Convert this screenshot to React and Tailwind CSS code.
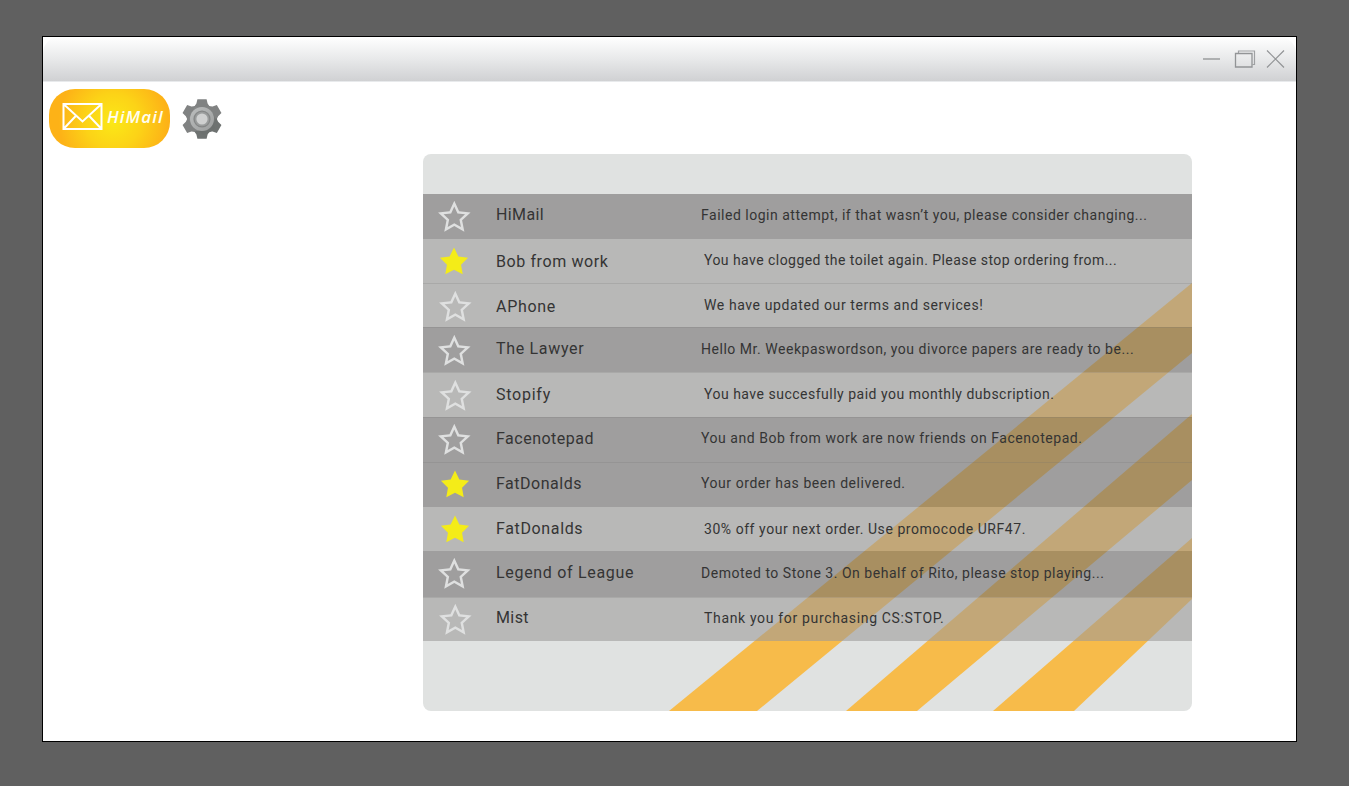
import React from "react";

const MAILS = [
  { from: "HiMail", text: "Failed login attempt, if that wasn’t you, please consider changing...", dark: true, row: "h-[45px]", ft: "tracking-[0.4px] pt-[11px]", tt: "tracking-[0.51px] pt-[11px]" },
  { from: "Bob from work", text: "You have clogged the toilet again. Please stop ordering from...", starred: true, row: "h-[44px]", ft: "tracking-[0.6px] pt-[13px]", tt: "tracking-[0.45px] pt-[11px]" },
  { from: "APhone", text: "We have updated our terms and services!", row: "h-[44px]", ft: "tracking-[0.7px] pt-[14px]", tt: "tracking-[0.6px] pt-[12px]", line: true, st: "pt-[1px]" },
  { from: "The Lawyer", text: "Hello Mr. Weekpaswordson, you divorce papers are ready to be...", dark: true, row: "h-[45px]", ft: "tracking-[0.68px] pt-[12px]", tt: "tracking-[0.53px] pt-[12px]", line: true, st: "pt-[1px]" },
  { from: "Stopify", text: "You have succesfully paid you monthly dubscription.", row: "h-[45px]", ft: "tracking-[0.75px] pt-[13px]", tt: "tracking-[0.5px] pt-[12px]", line: true, st: "pt-[1px]" },
  { from: "Facenotepad", text: "You and Bob from work are now friends on Facenotepad.", dark: true, row: "h-[45px]", ft: "tracking-[0.5px] pt-[12px]", tt: "tracking-[0.55px] pt-[11px]", line: true },
  { from: "FatDonalds", text: "Your order has been delivered.", dark: true, starred: true, row: "h-[45px]", ft: "tracking-[0.52px] pt-[12px]", tt: "tracking-[0.56px] pt-[11px]", line: true, st: "pl-[1px]" },
  { from: "FatDonalds", text: "30% off your next order. Use promocode URF47.", starred: true, row: "h-[44px]", ft: "tracking-[0.64px] pt-[12px]", tt: "tracking-[0.55px] pt-[12px]", st: "pl-[1px]" },
  { from: "Legend of League", text: "Demoted to Stone 3. On behalf of Rito, please stop playing...", dark: true, row: "h-[46px]", ft: "tracking-[0.69px] pt-[12px]", tt: "tracking-[0.52px] pt-[12px]" },
  { from: "Mist", text: "Thank you for purchasing CS:STOP.", row: "h-[44px]", ft: "tracking-[0.4px] pt-[11px]", tt: "tracking-[0.66px] pt-[11px]", line: true },
];

function starPoints(cx, cy, outer, inner) {
  return Array.from({ length: 10 }, (_, i) => {
    const r = i % 2 ? inner : outer;
    const a = (Math.PI / 5) * i - Math.PI / 2;
    return `${(cx + r * Math.cos(a)).toFixed(2)} ${(cy + r * Math.sin(a)).toFixed(2)}`;
  }).join(" L");
}

function Star({ filled }) {
  return (
    <svg width="34" height="43" viewBox="0 0 34 43">
      {filled ? (
        <path d={`M${starPoints(17, 23.4, 14.8, 7.4)}Z`} fill="#f4ec18" />
      ) : (
        <path fillRule="evenodd" fill="#dfe0e0" d={`M${starPoints(17.3, 23.8, 17.1, 8.2)}Z M${starPoints(17.3, 23.8, 11.3, 5.4)}Z`} />
      )}
    </svg>
  );
}

function Gear() {
  return (
    <svg width="40" height="40" viewBox="-20 -20 40 40">
      <defs>
        <linearGradient id="gear" x1="0" y1="0" x2="1" y2="1">
          <stop offset="0" stopColor="#8a8c8c" />
          <stop offset="0.6" stopColor="#7f8181" />
          <stop offset="1" stopColor="#626665" />
        </linearGradient>
        <linearGradient id="ring" x1="0" y1="0" x2="1" y2="1">
          <stop offset="0" stopColor="#bcbebe" />
          <stop offset="1" stopColor="#9b9d9d" />
        </linearGradient>
      </defs>
      <circle r="14.8" fill="url(#gear)" />
      {[0, 60, 120, 180, 240, 300].map((a) => (
        <path key={a} transform={`rotate(${a})`} d="M-8 -12 L-5.6 -15.4 L-4.6 -19.8 H4.6 L5.6 -15.4 L8 -12Z" fill={a === 120 || a === 180 ? "#6e7271" : "#808282"} />
      ))}
      <path d="M-5 10 L5 9 L11 4 L13 9 L8 13 L1 16Z" fill="#6c706f" />
      <circle r="12" fill="url(#ring)" />
      <circle r="8.6" fill="#858787" />
      <circle r="7.3" fill="#9a9c9c" />
      <circle r="5.6" fill="#cfd0d0" />
    </svg>
  );
}

export default function App() {
  return (
    <div className="h-[786px] w-[1349px] overflow-hidden bg-[#606060] pl-[42px] pt-[36px] font-['Roboto',sans-serif]">
      <div className="flex h-[706px] w-[1255px] flex-col border border-black bg-white">
        <header className="flex h-[45px] items-center justify-end rounded-t-[16px] border-b border-[#e8eaec] bg-linear-to-b from-white via-[#e8e9ea] to-[#d0d1d3] pr-[10px]">
          <svg width="84" height="22" viewBox="0 0 84 22" fill="none" stroke="#9fa1a3">
            <path d="M1 11H18" stroke="#aeb0b1" strokeWidth="2" />
            <path d="M36.5 5V3H52.5V16.5H50.5" strokeWidth="1.2" />
            <path d="M33.5 5.5H50V19H33.5Z" stroke="#929496" strokeWidth="1.3" />
            <path d="M65 2.5L82 19.5M82 2.5L65 19.5" stroke="#929496" strokeWidth="1.2" />
          </svg>
        </header>

        <nav className="flex h-[72px] shrink-0 items-start pl-[6px] pt-[7px]">
          <div className="flex h-[59px] w-[121px] items-center rounded-[26px] bg-[radial-gradient(circle_at_53%_55%,#fbe817_0%,#fcd317_38%,#fdb217_76%)] pl-[13px]">
            <svg width="41" height="28" viewBox="0 0 41 28" className="-mt-[4px]" fill="none" stroke="#ffffff" strokeWidth="2">
              <path d="M1.5 1H39.5V26H1.5Z M1.5 1L20.5 18.5L39.5 1 M1.5 26L14 12.7 M39.5 26L27 12.7" />
            </svg>
            <span className="-mt-[3px] ml-[4px] font-['Open_Sans',sans-serif] text-[17px] font-semibold italic leading-[20px] tracking-[1.1px] text-[#fffdf0]">HiMail</span>
          </div>
          <div className="ml-[12px] mt-[10px]">
            <Gear />
          </div>
        </nav>

        <main className="ml-[380px] grid h-[557px] w-[769px] overflow-hidden rounded-[8px] bg-[#e0e2e1]">
          <svg className="col-start-1 row-start-1" width="769" height="557" viewBox="423 154 769 557" fill="#f7bb4a">
            <path d="M669 711L1192 283V353L757 711Z" />
            <path d="M846 711L1192 414V480L917 711Z" />
            <path d="M993 711L1192 538V599L1074 711Z" />
          </svg>
          <ul className="col-start-1 row-start-1 pt-[40px]">
            {MAILS.map((m, i) => (
              <li
                key={i}
                className={`flex items-start text-[#343434] ${m.row} ${m.dark ? "bg-[#737271]/60" : "bg-[#9b9a99]/58"} ${m.line ? "shadow-[inset_0_1px_0_rgba(110,110,110,0.2)]" : ""}`}
              >
                <div className={`w-[73px] ${m.dark || m.starred ? "pl-[14px]" : "pl-[15px]"}`}>
                  <div className={m.st}>
                    <Star filled={m.starred} />
                  </div>
                </div>
                <span className={`w-[205px] whitespace-nowrap text-[16px] leading-[20px] ${m.ft}`}>{m.from}</span>
                <span className={`whitespace-nowrap text-[14px] leading-[20px] ${m.tt} ${m.dark ? "" : "pl-[3px]"}`}>{m.text}</span>
              </li>
            ))}
          </ul>
        </main>
      </div>
    </div>
  );
}
